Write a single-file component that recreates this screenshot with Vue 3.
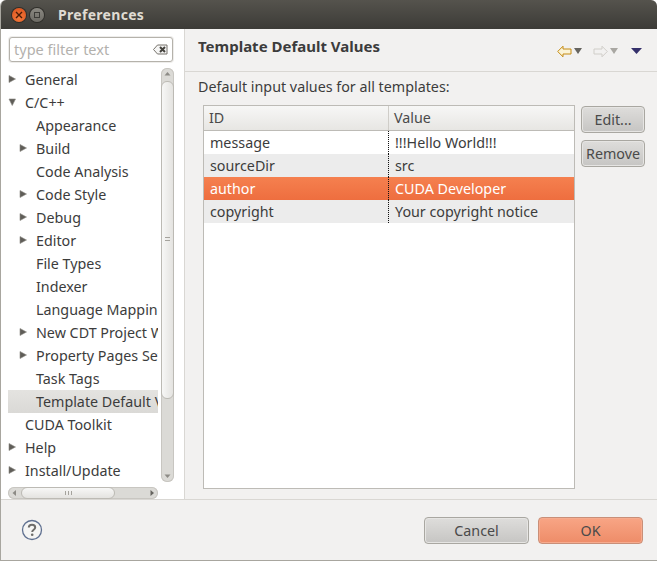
<template>
  <div class="window">
    <header class="titlebar">
      <span class="win-btn close">
        <svg width="8" height="8" viewBox="0 0 8 8"><path d="M1 1l6 6M7 1L1 7" stroke="#4a1c08" stroke-width="1.4" /></svg>
      </span>
      <span class="win-btn mini"><i></i></span>
      <span class="title">Preferences</span>
    </header>

    <div class="main">
      <aside class="sidebar">
        <div class="filter">
          <span class="filter-text">type filter text</span>
          <svg class="filter-clear" width="15" height="11" viewBox="0 0 15 11">
            <path d="M0.5 5.5L4.5 1H14V10H4.5z" fill="#f6f6f5" stroke="#77736c" />
            <path d="M7 3l5 5M12 3L7 8" stroke="#44423d" stroke-width="2" />
          </svg>
        </div>
        <div class="tree-wrap">
          <ul class="tree">
            <li
              v-for="item in treeItems"
              :key="item.label"
              class="tree-row"
              :class="{ selected: item.selected, child: item.level === 1 }"
            >
              <svg v-if="item.arrow" class="twist" width="8" height="8" viewBox="0 0 8 8">
                <path v-if="item.arrow === 'right'" d="M1 0.500l6.500 3.500-6.500 3.500z" fill="#5f5d58" stroke="#8a8882" stroke-width="0.6" />
                <path v-else d="M1 1h6.500L4.250 7.500z" fill="#5f5d58" stroke="#8a8882" stroke-width="0.6" />
              </svg>
              <span class="tree-label">{{ item.label }}</span>
            </li>
          </ul>
          <div class="vscroll">
            <svg class="scroll-btn" width="13" height="12" viewBox="0 0 13 12"><path d="M3.5 7.5h6L6.5 4z" fill="#8d8b86" /></svg>
            <div class="vtrack">
              <div class="vthumb"><span class="grip-v"></span></div>
            </div>
            <svg class="scroll-btn" width="13" height="12" viewBox="0 0 13 12"><path d="M3.5 4.5h6L6.5 8z" fill="#8d8b86" /></svg>
          </div>
        </div>
        <div class="hscroll">
          <svg width="12" height="12" viewBox="0 0 12 12"><path d="M8 3v6L4.500 6z" fill="#8d8b86" /></svg>
          <div class="hthumb"><span class="grip-h"></span></div>
          <svg class="hscroll-end" width="12" height="12" viewBox="0 0 12 12"><path d="M4.500 3v6L8 6z" fill="#66645f" /></svg>
        </div>
      </aside>

      <section class="content">
        <div class="page-head">
          <h1>Template Default Values</h1>
          <div class="page-tools">
            <svg width="15" height="13" viewBox="0 0 15 13"><path d="M0.700 6.500L6 1.200V4H14V9H6v2.800z" fill="#fbf3d6" stroke="#c48a12" /></svg>
            <svg class="drop" width="8" height="6" viewBox="0 0 8 6"><path d="M0 0h8L4 6z" fill="#66645f" /></svg>
            <svg class="fwd" width="15" height="13" viewBox="0 0 15 13"><path d="M14.300 6.500L9 1.200V4H1V9h8v2.800z" fill="#f2f1f0" stroke="#d0cec9" /></svg>
            <svg class="drop" width="8" height="6" viewBox="0 0 8 6"><path d="M0 0h8L4 6z" fill="#a9a7a2" /></svg>
            <svg class="view-menu" width="11" height="6" viewBox="0 0 11 6"><path d="M0 0h11L5.500 6z" fill="#35306b" /></svg>
          </div>
        </div>

        <div class="page-body">
          <p class="desc">Default input values for all templates:</p>
          <div class="table-row">
            <div class="table">
              <div class="thead">
                <div class="th th-id">ID</div>
                <div class="th">Value</div>
              </div>
              <div
                v-for="(row, i) in rows"
                :key="row.id"
                class="tr"
                :class="{ odd: i % 2 === 1, active: row.active }"
              >
                <div class="td td-id">{{ row.id }}</div>
                <div class="td">{{ row.value }}</div>
              </div>
            </div>
            <div class="side-buttons">
              <button class="btn">Edit...</button>
              <button class="btn">Remove</button>
            </div>
          </div>
        </div>
      </section>
    </div>

    <footer class="footer">
      <svg class="help" width="22" height="22" viewBox="0 0 22 22">
        <circle cx="11" cy="11" r="9.500" fill="#f5f5f4" stroke="#5f7090" stroke-width="1.300" />
        <path d="M7.800 8.500C7.800 6.600 9.200 5.700 11 5.700c1.900 0 3.200 1 3.200 2.700 0 2.300-3 2.300-3 4.500" fill="none" stroke="#6d6c6a" stroke-width="2" />
        <circle cx="11.200" cy="15.700" r="1.300" fill="#6d6c6a" />
      </svg>
      <div class="footer-buttons">
        <button class="btn wide">Cancel</button>
        <button class="btn wide ok">OK</button>
      </div>
    </footer>
  </div>
</template>

<script setup>
const treeItems = [
  { label: 'General', arrow: 'right', level: 0 },
  { label: 'C/C++', arrow: 'down', level: 0 },
  { label: 'Appearance', level: 1 },
  { label: 'Build', arrow: 'right', level: 1 },
  { label: 'Code Analysis', level: 1 },
  { label: 'Code Style', arrow: 'right', level: 1 },
  { label: 'Debug', arrow: 'right', level: 1 },
  { label: 'Editor', arrow: 'right', level: 1 },
  { label: 'File Types', level: 1 },
  { label: 'Indexer', level: 1 },
  { label: 'Language Mappings', level: 1 },
  { label: 'New CDT Project Wizard', arrow: 'right', level: 1 },
  { label: 'Property Pages Settings', arrow: 'right', level: 1 },
  { label: 'Task Tags', level: 1 },
  { label: 'Template Default Values', level: 1, selected: true },
  { label: 'CUDA Toolkit', level: 0 },
  { label: 'Help', arrow: 'right', level: 0 },
  { label: 'Install/Update', arrow: 'right', level: 0 },
]

const rows = [
  { id: 'message', value: '!!!Hello World!!!' },
  { id: 'sourceDir', value: 'src' },
  { id: 'author', value: 'CUDA Developer', active: true },
  { id: 'copyright', value: 'Your copyright notice' },
]
</script>

<style>
html,
body {
  margin: 0;
  background: #fff;
}
</style>

<style scoped>
.window {
  width: 657px;
  height: 561px;
  box-sizing: border-box;
  display: flex;
  flex-direction: column;
  overflow: hidden;
  background: #f2f1f0;
  color: #3c3c3c;
  font-family: "Noto Sans", sans-serif;
  font-size: 14.3px;
  border-radius: 6px 6px 0 0;
  border-left: 1px solid #a8a69f;
  border-bottom: 1px solid #a8a69f;
}

.titlebar {
  height: 29px;
  flex: none;
  margin-left: -1px;
  display: flex;
  align-items: center;
  background: linear-gradient(#55534d, #3c3b37);
  padding-left: 12px;
}

.win-btn {
  width: 14px;
  height: 14px;
  border-radius: 50%;
  display: flex;
  align-items: center;
  justify-content: center;
}

.close {
  background: radial-gradient(circle at 50% 70%, #f47a3c, #d94f1a);
  box-shadow: 0 0 0 1px #2f2e2a;
}

.mini {
  margin-left: 4px;
  background: linear-gradient(#8a8881, #6d6b65);
  box-shadow: 0 0 0 1px #2f2e2a;
}

.mini i {
  width: 4px;
  height: 4px;
  border: 1px solid #3c3b37;
}

.title {
  margin-left: 14px;
  color: #dfdbd2;
  font-weight: 700;
  font-size: 14px;
  letter-spacing: 0.3px;
}

.main {
  flex: 1;
  min-height: 0;
  display: flex;
}

.sidebar {
  width: 184px;
  flex: none;
  box-sizing: border-box;
  background: #fff;
  border-right: 1px solid #d9d7d3;
  padding: 7px 10px 0 7px;
}

.filter {
  height: 25px;
  box-sizing: border-box;
  margin: 1px 0 0 1px;
  width: 164px;
  display: flex;
  align-items: center;
  justify-content: space-between;
  padding: 0 4px;
  border: 1px solid #b5b2ab;
  border-radius: 3px;
  background: #fff;
  box-shadow: 0 0 0 1px #eeedeb;
}

.filter-text {
  color: #b3b1ad;
  font-size: 14.5px;
  line-height: 21px;
}

.tree-wrap {
  display: flex;
  margin-top: 6px;
  height: 418px;
}

.tree {
  list-style: none;
  margin: 0;
  padding: 0;
  width: 150px;
  overflow: hidden;
}

.tree-row {
  height: 23px;
  display: flex;
  align-items: center;
  padding-left: 17px;
  position: relative;
  white-space: nowrap;
}

.tree-row.child {
  padding-left: 28px;
}

.tree-row.selected {
  background: linear-gradient(#e4e3e0, #dad9d6);
}

.twist {
  position: absolute;
  left: 0;
  top: 7px;
}

.tree-row.child .twist {
  left: 11px;
}

.vscroll {
  width: 13px;
  margin-left: 3px;
  display: flex;
  flex-direction: column;
  background: #dbdad6;
  border-radius: 6px;
  box-shadow: inset 0 0 0 1px #c8c6c1;
  height: 414px;
}

.scroll-btn {
  flex: none;
}

.vtrack {
  flex: 1;
}

.vthumb {
  height: 318px;
  margin: 1px 0 0;
  box-sizing: border-box;
  background: linear-gradient(90deg, #f7f7f6, #e4e3e0);
  border: 1px solid #bcbab4;
  border-radius: 6px;
  display: flex;
  align-items: center;
  justify-content: center;
}

.grip-v {
  width: 5px;
  height: 6px;
  background: repeating-linear-gradient(#a5a39d 0 1px, transparent 1px 3px);
}

.hscroll {
  width: 150px;
  height: 12px;
  margin-top: 1px;
  display: flex;
  align-items: center;
  background: #dbdad6;
  border-radius: 6px;
  box-shadow: inset 0 0 0 1px #c8c6c1;
}

.hthumb {
  width: 94px;
  height: 12px;
  margin-left: 1px;
  box-sizing: border-box;
  background: linear-gradient(#f7f7f6, #e4e3e0);
  border: 1px solid #bcbab4;
  border-radius: 6px;
  display: flex;
  align-items: center;
  justify-content: center;
}

.grip-h {
  width: 7px;
  height: 4px;
  background: repeating-linear-gradient(90deg, #a5a39d 0 1px, transparent 1px 3px);
}

.hscroll-end {
  margin-left: auto;
}

.content {
  flex: 1;
  min-width: 0;
  display: flex;
  flex-direction: column;
}

.page-head {
  height: 43px;
  flex: none;
  box-sizing: border-box;
  display: flex;
  align-items: center;
  justify-content: space-between;
  padding: 0 15px 8px 13px;
  border-bottom: 1px solid #d9d7d3;
}

.page-head h1 {
  margin: 0;
  font-size: 15px;
  font-weight: 700;
  color: #3c3c3c;
}

.page-tools {
  display: flex;
  align-items: center;
  margin-top: 10px;
}

.drop {
  margin-left: 2px;
}

.fwd {
  margin-left: 11px;
}

.view-menu {
  margin-left: 13px;
}

.page-body {
  flex: 1;
  min-height: 0;
  padding: 5px 12px 10px 18px;
  display: flex;
  flex-direction: column;
}

.desc {
  margin: 0 0 8px -5px;
  height: 20px;
  line-height: 20px;
}

.table-row {
  flex: 1;
  min-height: 0;
  display: flex;
}

.table {
  width: 372px;
  height: 384px;
  box-sizing: border-box;
  background: #fff;
  border: 1px solid #bdbbb6;
}

.thead {
  height: 24px;
  display: flex;
  background: linear-gradient(#f7f7f6, #e7e6e3);
  border-bottom: 1px solid #bdbbb6;
}

.th {
  padding-left: 5px;
  line-height: 24px;
  color: #4a4a4a;
}

.th-id {
  width: 185px;
  box-sizing: border-box;
  border-right: 1px solid #cfcdc8;
}

.tr {
  height: 23px;
  display: flex;
  line-height: 23px;
}

.tr.odd {
  background: #ececec;
}

.tr.active {
  background: linear-gradient(#f5804f, #ee6e3f);
  color: #fff;
}

.td {
  padding-left: 6px;
}

.td-id {
  width: 185px;
  box-sizing: border-box;
  border-right: 1px dotted #111;
}

.side-buttons {
  margin-left: 6px;
  padding-top: 1px;
  display: flex;
  flex-direction: column;
  gap: 7px;
}

.btn {
  font: inherit;
  color: #4a4a4a;
  width: 64px;
  height: 27px;
  padding: 0;
  box-sizing: border-box;
  border: 1px solid #a9a7a1;
  border-radius: 4px;
  background: linear-gradient(#dedddb, #c6c5c3);
  box-shadow: inset 0 0 0 1px #e6e5e3;
}

.footer {
  height: 61px;
  flex: none;
  box-sizing: border-box;
  border-top: 1px solid #d9d7d3;
  display: flex;
  align-items: center;
  justify-content: space-between;
  padding: 0 14px 0 20px;
}

.footer-buttons {
  display: flex;
  gap: 9px;
}

.btn.wide {
  width: 105px;
}

.btn.ok {
  background: linear-gradient(#f8a585, #ee8c68);
  border-color: #c98f78;
  box-shadow: inset 0 0 0 1px #f7ab8e;
}
</style>
